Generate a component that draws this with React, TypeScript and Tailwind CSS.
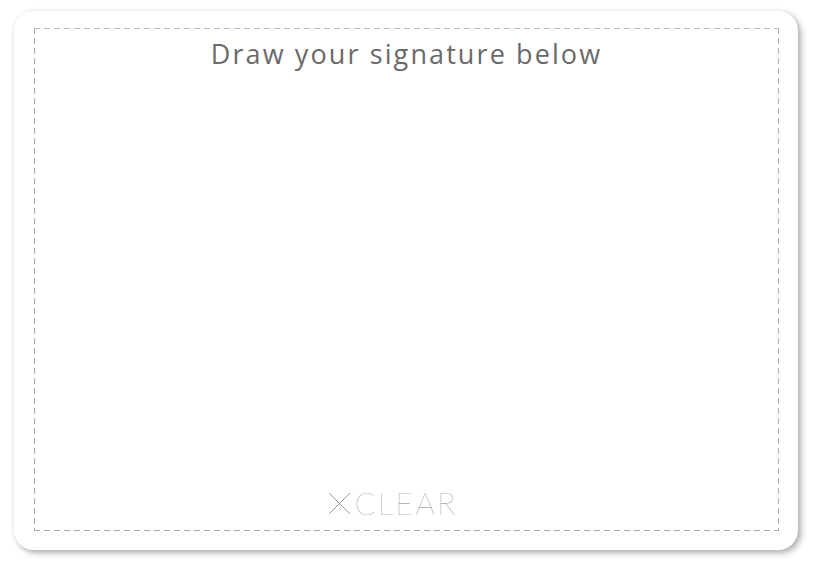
import React from "react";

function ClearIcon() {
    return (
        <svg width="23" height="23" viewBox="0 0 23 23" className="shrink-0">
            <path d="M1 1 L22 22 M22 1 L1 22" stroke="#999999" strokeWidth="1" fill="none" />
        </svg>
    );
}

export default function App() {
    return (
        <div className="w-[813px] h-[563px] bg-white pl-[14px] pt-[11px] antialiased">
            <div className="w-[784px] h-[539px] bg-white rounded-[20px] shadow-[3px_3px_6px_rgba(0,0,0,0.3),0_0_6px_rgba(0,0,0,0.06)] pl-[20px] pr-[19px] pt-[17px] pb-[19px]">
                {/* dashed frame, drawn with gradients so the dashes are long like the original */}
                <div className="h-full flex flex-col items-center bg-[linear-gradient(to_right,#b8b8b8_6px,transparent_6px),linear-gradient(to_right,#a8a8a8_6px,transparent_6px),linear-gradient(to_bottom,#a8a8a8_6px,transparent_6px),linear-gradient(to_bottom,#b0b0b0_6px,transparent_6px)] bg-size-[10px_1px,10px_1px,1px_10px,1px_10px] bg-position-[left_top,left_bottom,left_top,right_top] [background-repeat:repeat-x,repeat-x,repeat-y,repeat-y]">
                    <h1 className="mt-[8px] text-[27px] leading-[36px] tracking-[2.1px] text-[#6a6a6a] font-['Open_Sans',sans-serif]">
                        Draw your signature below
                    </h1>
                    <div className="flex-1" />
                    <button className="mb-[11px] mr-[28px] flex items-center gap-[4px] text-[#7c7c7c] font-['Lato',sans-serif] font-thin text-[31px] leading-[34px] tracking-[2px]">
                        <ClearIcon />
                        CLEAR
                    </button>
                </div>
            </div>
        </div>
    );
}
